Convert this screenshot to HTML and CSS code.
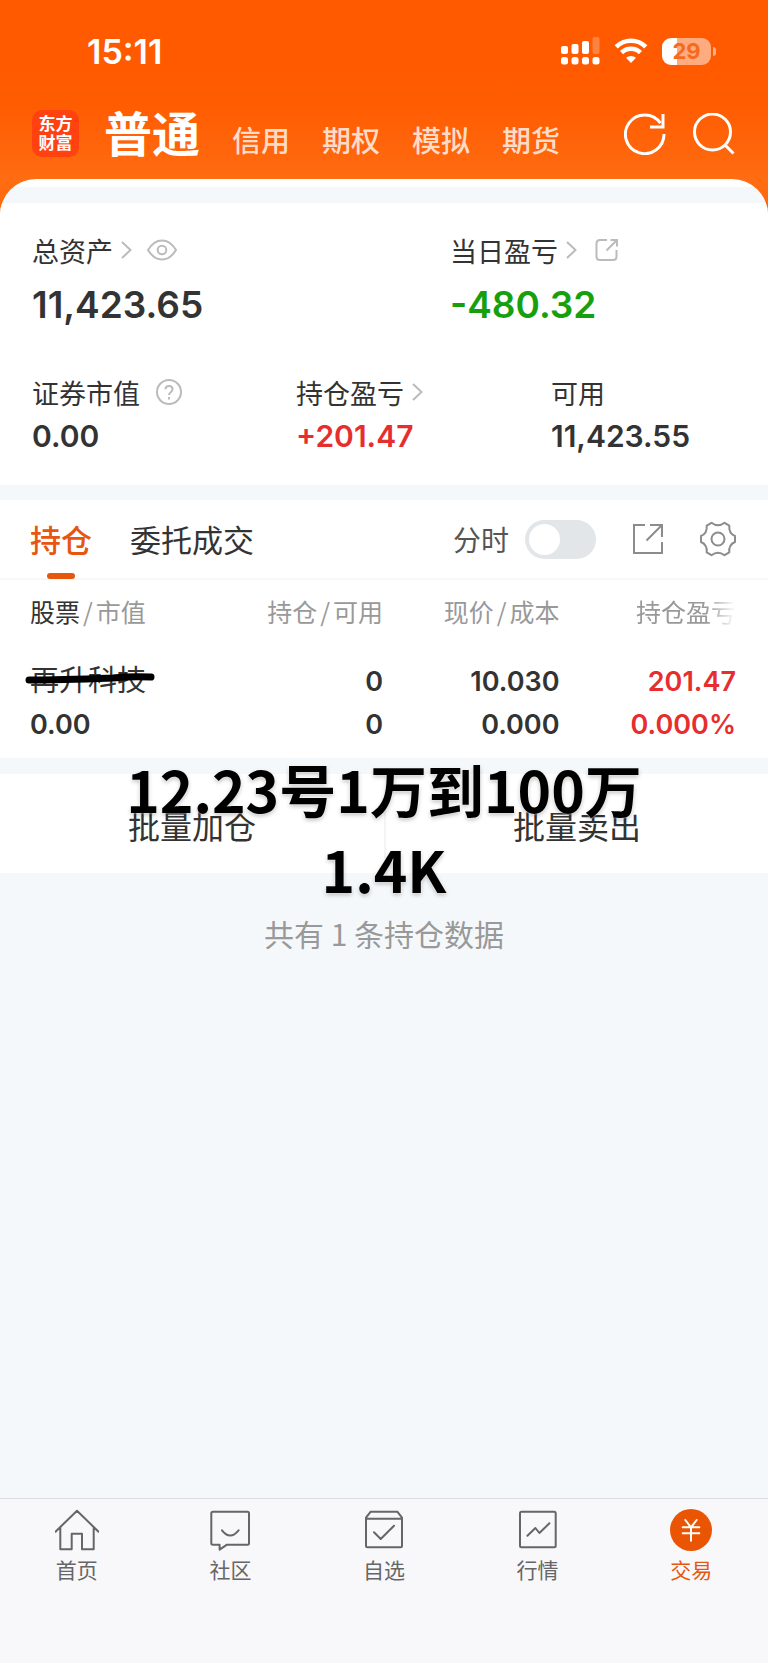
FILE: index.html
```html
<!DOCTYPE html>
<html lang="zh-CN">
<head>
<meta charset="utf-8">
<meta name="viewport" content="width=device-width, initial-scale=1">
<title>交易</title>
<link rel="stylesheet" href="styles.css">
</head>
<body class="page">
<header>
  <div class="status">
    <span class="time">15:11</span>
    <div class="status-icons">
      <svg width="39" height="28" viewBox="0 0 39 28" fill="#fff" aria-hidden="true">
        <rect x="0" y="9" width="7" height="8" rx="2"/><rect x="10.5" y="7" width="7" height="10" rx="2"/><rect x="21" y="4" width="7" height="13" rx="2"/><rect x="31.500" y="0" width="7" height="17" rx="2" opacity=".25"/>
        <rect x="0" y="20" width="7" height="7.500" rx="2.500"/><rect x="10.500" y="20" width="7" height="7.500" rx="2.500"/><rect x="21" y="20" width="7" height="7.500" rx="2.500"/><rect x="31.500" y="20" width="7" height="7.500" rx="2.500"/>
      </svg>
      <svg class="wifi" width="34" height="26" viewBox="0 0 34 26" fill="none" stroke="#fff" stroke-width="4.600" aria-hidden="true">
        <path d="M2.200 8.800a21 21 0 0 1 29.600 0"/><path d="M7.600 14.600a13.500 13.500 0 0 1 18.800 0"/><path d="M17 25l-5-5.200a7.500 7.500 0 0 1 10 0z" fill="#fff" stroke="none"/>
      </svg>
      <span class="battery">29</span>
    </div>
  </div>
  <div class="appbar">
    <div class="logo">东方<br>财富</div>
    <nav class="markets">
      <a class="market current" href="#">普通</a><a class="market" href="#">信用</a><a class="market" href="#">期权</a><a class="market" href="#">模拟</a><a class="market" href="#">期货</a>
    </nav>
    <button class="icon-btn" aria-label="刷新"><svg class="bold" width="42" height="42" viewBox="0 0 42 42" stroke="#fff"><path d="M40 21A19.300 19.300 0 1 1 36.500 10.200"/><path d="M39 1v13H26"/></svg></button>
    <button class="icon-btn" aria-label="搜索"><svg class="bold" width="42" height="42" viewBox="0 0 42 42" stroke="#fff"><circle cx="19.500" cy="19" r="18"/><path d="M31.500 31.500l9 9"/></svg></button>
  </div>
</header>

<main class="sheet">
  <section class="summary">
    <div class="totals">
      <div>
        <div class="label">总资产<svg class="chevron" width="11" height="18" viewBox="0 0 11 18"><path d="M1 1l8.500 8L1 17"/></svg><svg class="eye" width="30" height="22" viewBox="0 0 30 22"><path d="M1 11C5 4.500 9.500 1.500 15 1.500S25 4.500 29 11c-4 6.500-8.500 9.500-14 9.500S5 17.500 1 11z"/><circle cx="15" cy="11" r="4.300"/></svg></div>
        <div class="amount">11,423.65</div>
      </div>
      <div>
        <div class="label">当日盈亏<svg class="chevron" width="11" height="18" viewBox="0 0 11 18"><path d="M1 1l8.500 8L1 17"/></svg><svg class="share" width="24" height="24" viewBox="0 0 24 24"><path d="M12 2H5Q1.500 2 1.500 5.500v13Q1.500 22 5 22h13q3.500 0 3.500-3.500V12M11.500 12.500L22 2M15.500 2H22v6.500"/></svg></div>
        <div class="amount fall">-480.32</div>
      </div>
    </div>
    <div class="details">
      <div>
        <div class="label">证券市值<svg class="help" width="26" height="26" viewBox="0 0 26 26"><circle cx="13" cy="13" r="12"/><path d="M9.500 10.300c0-4.500 7-4.500 7 0 0 3-3.500 2.800-3.500 5.800M13 18v2.400"/></svg></div>
        <div class="value">0.00</div>
      </div>
      <div>
        <div class="label">持仓盈亏<svg class="chevron" width="11" height="18" viewBox="0 0 11 18"><path d="M1 1l8.500 8L1 17"/></svg></div>
        <div class="value rise">+201.47</div>
      </div>
      <div>
        <div class="label">可用</div>
        <div class="value">11,423.55</div>
      </div>
    </div>
  </section>

  <section class="holdings">
    <div class="tabs">
      <button class="tab active">持仓</button>
      <button class="tab">委托成交</button>
      <label class="toggle-label" for="intraday">分时</label>
      <input class="toggle" id="intraday" type="checkbox">
      <button class="icon-btn" aria-label="导出"><svg width="32" height="32" viewBox="0 0 32 32"><path d="M13 2H2v28h28V19M18 2h12v12M14.500 17.500L30 2"/></svg></button>
      <button class="icon-btn" aria-label="设置"><svg width="36" height="36" viewBox="0 0 36 36"><circle cx="18" cy="18" r="6.500"/><path d="M11.500 1.800Q18 6.800 24.500 1.800L29.300 4.600Q28.500 12.200 35 15V21Q28.500 23.800 29.300 31.400L24.500 34.200Q18 29.200 11.500 34.200L6.700 31.400Q7.500 23.800 1 21V15Q7.500 12.200 6.700 4.600Z" stroke-linejoin="round"/></svg></button>
    </div>
    <table class="positions">
      <thead><tr><th><span class="dark">股票</span><span class="slash">/</span>市值</th><th>持仓<span class="slash">/</span>可用</th><th>现价<span class="slash">/</span>成本</th><th><span class="faded">持仓盈亏</span></th></tr></thead>
      <tbody>
        <tr><td><span class="stock">再升科技<svg class="scribble" viewBox="0 0 130 12"><path d="M4 8C30 8 60 7 88 6Q105 4 126 5"/></svg></span></td><td>0</td><td>10.030</td><td class="rise">201.47</td></tr>
        <tr><td>0.00</td><td>0</td><td>0.000</td><td class="rise">0.000%</td></tr>
      </tbody>
    </table>
  </section>

  <section class="bulk">
    <button class="bulk-btn">批量加仓</button>
    <button class="bulk-btn">批量卖出</button>
    <p class="caption">12.23号1万到100万<br>1.4K</p>
  </section>
  <p class="count">共有 1 条持仓数据</p>
</main>

<nav class="bottom">
  <a class="item" href="#"><svg width="44" height="44" viewBox="0 0 44 44"><path d="M.5 23.700L22 2.700l21.500 21M5.300 19.300v22h11.400V25.700H27v15.600h11.700v-22"/></svg>首页</a>
  <a class="item" href="#"><svg width="44" height="44" viewBox="0 0 44 44"><path d="M5 3.700h34.500q1.500 0 1.500 1.500v30q0 1.500-1.500 1.500H19l-7.400 5v-5H5q-1.700 0-1.700-1.500v-30Q3.300 3.700 5 3.700zM14 22.300q8 10.400 16.600 0"/></svg>社区</a>
  <a class="item" href="#"><svg width="44" height="44" viewBox="0 0 44 44"><path d="M4 10.700h36M8.700 3.700h26.600l4.700 6V37.800q0 1.500-1.500 1.500h-33q-1.500 0-1.500-1.500V9.700zM12 24.300l6.700 6.700L32 17.700"/></svg>自选</a>
  <a class="item" href="#"><svg width="44" height="44" viewBox="0 0 44 44"><rect x="4" y="3.700" width="35.700" height="35.600" rx="1.500"/><path d="M11.400 27.700l8-7.700 4 5 10-9.700"/></svg>行情</a>
  <a class="item selected" href="#"><svg width="44" height="44" viewBox="0 0 44 44"><circle class="coin" cx="22" cy="22" r="21"/><path class="yen" d="M16.300 12L22 19.300 27.700 12M13.700 19.300h16.600M13.700 25.300h16.600M22 19.300v13.400"/></svg>交易</a>
</nav>
</body>
</html>
```
FILE: styles.css
```css
* { box-sizing: border-box; }

.page {
  margin: 0;
  min-height: 100vh;
  display: flex;
  flex-direction: column;
  background: linear-gradient(#ff5a00 0, #ff5a00 70px, #ff5c02 105px, #ff6c12 180px, #ff6408 230px);
  font-family: Inter, "Noto Sans CJK SC", sans-serif;
  color: #333;
}

button { border: 0; padding: 0; background: none; font: inherit; color: inherit; }
a { color: inherit; text-decoration: none; }
svg { display: block; flex: none; }

/* status bar */
.status {
  height: 102px;
  padding: 0 57px 0 87px;
  display: flex;
  align-items: center;
  justify-content: space-between;
  color: #fff;
}
.time { font-size: 34px; font-weight: 600; }
.status-icons { display: flex; align-items: center; }
.wifi { margin: 0 14px; }
.battery {
  position: relative;
  width: 49px;
  height: 27px;
  border-radius: 9px;
  background: linear-gradient(90deg, #fff 15px, #ffab80 15px);
  color: #f56a1c;
  font-size: 22px;
  font-weight: 700;
  line-height: 27px;
  text-align: center;
}
.battery::after {
  content: "";
  position: absolute;
  left: 51px;
  top: 9px;
  width: 3px;
  height: 9px;
  border-radius: 0 4px 4px 0;
  background: #ffab80;
}

/* market bar */
.appbar {
  height: 77px;
  padding: 0 33px 14px 32px;
  display: flex;
  align-items: center;
  color: #fff;
}
.logo {
  width: 47px;
  height: 47px;
  padding-top: 5px;
  border-radius: 10px;
  background: #ff4210;
  font-size: 17px;
  font-weight: 700;
  line-height: 19px;
  text-align: center;
}
.markets {
  flex: 1;
  margin-left: 25px;
  padding-top: 10px;
  display: flex;
  align-items: baseline;
  gap: 32px;
  line-height: 62px;
}
.market { font-size: 29px; font-weight: 500; color: #ffdcc8; }
.market.current { font-size: 48px; font-weight: 700; color: #fff; }
.icon-btn { margin-left: 27px; }

/* content sheet */
.sheet {
  flex: 1;
  overflow: hidden;
  padding-top: 8px;
  border-radius: 36px 36px 0 0;
  background: linear-gradient(#fff 8px, #f5f8fa 8px);
}
.summary {
  margin-top: 16px;
  padding: 28px 32px 29px;
  background: #fff;
}
.totals { display: grid; grid-template-columns: 418fr 286fr; }
.details { display: grid; grid-template-columns: 264fr 255fr 185fr; margin-top: 44px; }
.label {
  display: flex;
  align-items: center;
  height: 38px;
  font-size: 27px;
}
.label svg, .icon-btn svg { fill: none; stroke-width: 2; }
.icon-btn .bold { stroke-width: 3; }
.label svg { stroke: #bbb; }
.chevron { margin-left: 8px; }
.eye { margin-left: 15px; }
.share { margin-left: 18px; }
.help { margin-left: 16px; }
.amount { margin-top: 12px; font-size: 37px; font-weight: 600; line-height: 48px; }
.value { margin-top: 5px; font-size: 30px; font-weight: 600; line-height: 40px; }
.rise { color: #e62e2e; }
.fall { color: #17a00e; }

/* holdings */
.holdings { margin-top: 15px; padding-bottom: 12px; background: #fff; }
.tabs {
  height: 80px;
  padding: 0 32px 0 30px;
  display: flex;
  align-items: center;
  border-bottom: 2px solid #f5f7f9;
}
.tab { position: relative; height: 79px; margin-right: 38px; padding-bottom: 1px; font-size: 31px; }
.tab.active { color: #e6560f; font-weight: 500; }
.tab.active::after {
  content: "";
  position: absolute;
  left: 50%;
  bottom: 0;
  width: 28px;
  height: 6px;
  margin-left: -14px;
  border-radius: 3px;
  background: #e6560f;
}
.toggle-label { margin-left: auto; font-size: 28px; color: #555; }
.toggle {
  appearance: none;
  width: 71px;
  height: 39px;
  margin: 0 0 0 16px;
  padding: 4px;
  border-radius: 20px;
  background: #e2e6e8;
}
.toggle::before {
  content: "";
  display: block;
  width: 31px;
  height: 31px;
  border-radius: 50%;
  background: #fff;
}
.toggle:checked { background: #e6560f; }
.toggle:checked::before { margin-left: auto; }
.tabs .icon-btn { margin-left: 36px; }
.tabs .icon-btn svg { stroke: #8c8c8c; }

.positions {
  width: calc(100% - 62px);
  margin: 0 32px 0 30px;
  table-layout: fixed;
  border-spacing: 0;
}
.positions th, .positions td { padding: 0; text-align: right; white-space: nowrap; }
.positions th:first-child, .positions td:first-child { text-align: left; }
.positions thead th {
  height: 80px;
  padding-bottom: 18px;
  font-family: "Noto Sans CJK SC", sans-serif;
  font-size: 25px;
  font-weight: 400;
  color: #999;
}
.slash { padding: 0 3px; }
.positions td { height: 43px; font-size: 27px; font-weight: 600; line-height: 28px; }
.dark { color: #333; }
.faded { -webkit-mask-image: linear-gradient(90deg, #000 70%, transparent); mask-image: linear-gradient(90deg, #000 70%, transparent); }
.stock { position: relative; font-size: 29px; font-weight: 400; }
.scribble {
  position: absolute;
  left: -5px;
  top: 9px;
  width: 130px;
  fill: none;
  stroke: #000;
  stroke-width: 7;
  stroke-linecap: round;
}

/* bulk actions */
.bulk {
  position: relative;
  margin-top: 16px;
  padding: 17px 0 15px;
  display: grid;
  grid-template-columns: 1fr 1fr;
  background: #fff;
}
.bulk-btn { height: 67px; font-size: 32px; }
.bulk-btn + .bulk-btn { border-left: 2px solid #f2f5f7; }
.caption {
  position: absolute;
  left: 0;
  right: 0;
  top: -26px;
  margin: 0;
  font-family: "Noto Sans CJK SC", sans-serif;
  font-size: 57px;
  font-weight: 700;
  line-height: 80px;
  text-align: center;
  color: #000;
  text-shadow: 0 0 2px #fff, 0 2px 4px rgba(0, 0, 0, .25);
}
.count { margin: 38px 0 0; font-family: "Noto Sans CJK SC", sans-serif; font-size: 30px; line-height: 44px; text-align: center; color: #999; }

/* bottom navigation */
.bottom {
  display: grid;
  grid-template-columns: repeat(5, 1fr);
  padding: 9px 0 79px;
  border-top: 1px solid #dcdde0;
  background: #f8f8fb;
}
.item {
  display: flex;
  flex-direction: column;
  align-items: center;
  gap: 6px;
  font-size: 21px;
  line-height: 26px;
  color: #666;
}
.item svg { fill: none; stroke: #666; stroke-width: 2; stroke-linejoin: round; stroke-linecap: round; }
.item.selected { color: #e6560f; }
.item .coin { fill: #ea5504; stroke: none; }
.item .yen { stroke: #fff; }
```
